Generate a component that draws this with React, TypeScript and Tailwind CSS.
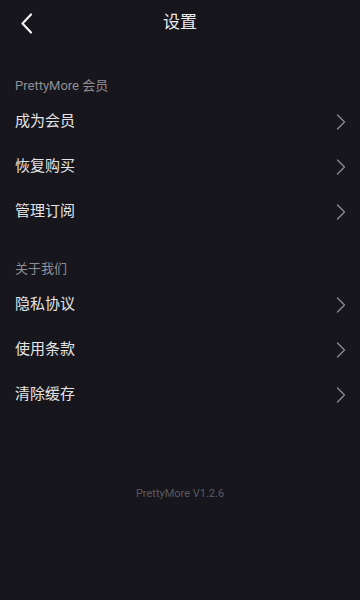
const SECTIONS = [
	{title: "PrettyMore 会员", items: ["成为会员", "恢复购买", "管理订阅"]},
	{title: "关于我们", items: ["隐私协议", "使用条款", "清除缓存"]},
]

const Row = ({label}: {label: string}) => (
	<div className="flex h-[45px] items-center justify-between pl-[15px] pr-[14px]">
		<span className="text-[15px] text-[#e4e4e6]">{label}</span>
		<svg width="10" height="16" viewBox="0 0 10 16" fill="none" className="text-[#8c8b91]">
			<polyline points="1.5,1 8.5,8 1.5,15" stroke="currentColor" strokeWidth="1.3" strokeLinecap="round" strokeLinejoin="round" />
		</svg>
	</div>
)

const App = () => {
	return (
		<div
			className="flex h-[600px] w-[360px] flex-col bg-[#17161c]"
			style={{fontFamily: 'Roboto, "Noto Sans CJK SC", sans-serif'}}>
			<header className="relative flex h-[46px] items-center justify-center">
				<svg width="14" height="21" viewBox="0 0 14 21" fill="none" className="absolute left-[20px] top-[13px] text-[#f2f2f2]">
					<polyline points="11,1.5 2.5,10.5 11,19.5" stroke="currentColor" strokeWidth="2.2" strokeLinecap="round" strokeLinejoin="round" />
				</svg>
				<h1 className="text-[17px] text-[#ececee]">设置</h1>
			</header>

			{SECTIONS.map((section, i) => (
				<section key={section.title} className={i === 0 ? "mt-[30px]" : "mt-[25px]"}>
					<p className="h-[23px] pl-[15px] text-[13px] leading-5 text-[#8f8e95]">{section.title}</p>
					{section.items.map(item => (
						<Row key={item} label={item} />
					))}
				</section>
			))}

			<p className="mt-[69px] text-center text-[11px] leading-4 text-[#5a595f]">PrettyMore V1.2.6</p>
		</div>
	)
}

export default App
